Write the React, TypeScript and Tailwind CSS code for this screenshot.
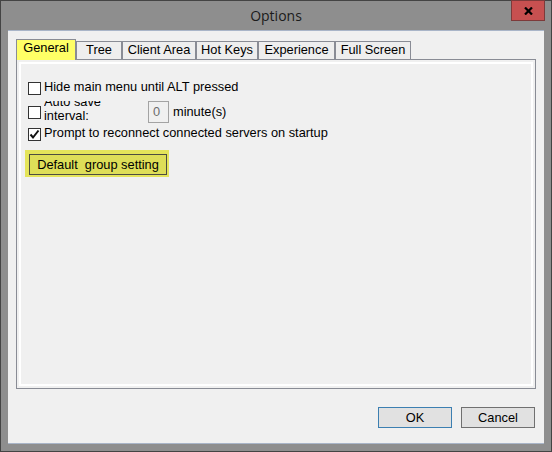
import React from "react";

const tabs = [
  { label: "General", w: "w-[60px]", active: true },
  { label: "Tree", w: "w-[46px]" },
  { label: "Client Area", w: "w-[74px]" },
  { label: "Hot Keys", w: "w-[62px]" },
  { label: "Experience", w: "w-[77px]" },
  { label: "Full Screen", w: "w-[76px]" },
];

function Box({ checked = false }: { checked?: boolean }) {
  return (
    <div className="w-[13px] h-[13px] shrink-0 border border-[#333333] bg-white flex items-center justify-center">
      {checked && (
        <svg width="11" height="11" viewBox="0 0 11 11">
          <path d="M1.5 5.5 L4 8.5 L9.5 1.5" stroke="#111" strokeWidth="2" fill="none" />
        </svg>
      )}
    </div>
  );
}

export default function App() {
  return (
    <div
      className="w-[552px] h-[452px] bg-[#8e8e8e] border border-[#444444] flex flex-col relative"
      style={{ fontFamily: '"Liberation Sans", Arial, sans-serif' }}
    >
      <div
        className="h-[29px] flex items-center justify-center text-[14px] text-[#1b1b1b]"
        style={{ fontFamily: '"Open Sans", "Noto Sans", sans-serif' }}
      >
        Options
      </div>
      <div className="absolute -top-px right-[6px] w-[34px] h-[21px] bg-[#c75050] border border-[#7d3a3a] flex items-center justify-center">
        <svg width="9" height="8" viewBox="0 0 9 8">
          <path d="M1 0.5 L8 7.5 M8 0.5 L1 7.5" stroke="#000" strokeWidth="2.2" />
        </svg>
      </div>

      <div className="mx-[7px] mb-[7px] flex-1 bg-[#f0f0f0] border-t border-b border-[#a9b5c8] flex flex-col pt-[8px] px-[8px] text-[12.8px] text-black">
        <div className="h-[20px] flex items-end">
          {tabs.map((t) =>
            t.active ? (
              <div
                key={t.label}
                className={`${t.w} h-[21px] -mb-px z-10 bg-[#ffff66] border-l border-t border-r border-[#898c95] flex justify-center leading-[15px]`}
              >
                {t.label}
              </div>
            ) : (
              <div
                key={t.label}
                className={`${t.w} h-[18px] bg-[#eeeeee] border-l border-t border-r border-[#898c95] flex justify-center leading-[15px]`}
              >
                {t.label}
              </div>
            )
          )}
        </div>

        <div className="w-[520px] h-[330px] border border-[#898c95] p-[2px] bg-[#f0f0f0]">
          <div className="w-full h-full border-2 border-white flex flex-col pt-[18px] pl-[7px]">
            <div className="flex items-center h-[13px]">
              <Box />
              <span className="ml-[3px] mb-[4px] leading-[15px] whitespace-nowrap">
                Hide main menu until ALT pressed
              </span>
            </div>

            <div className="flex items-center h-[24px] mt-[5px]">
              <Box />
              <div className="ml-[3px] w-[96px] h-[22px] overflow-hidden flex items-end">
                <div className="leading-[14px]">
                  Auto save
                  <br />
                  interval:
                </div>
              </div>
              <div className="ml-[8px] w-[21px] h-[22px] border border-[#a3a3a3] bg-[#f0f0f0] text-[#6d6d6d] pl-[4px] leading-[19px]">
                0
              </div>
              <span className="ml-[4px] mb-[2px] leading-[15px]">minute(s)</span>
            </div>

            <div className="flex items-center h-[13px] mt-[4px]">
              <Box checked />
              <span className="ml-[3px] mb-[4px] leading-[15px] whitespace-nowrap">
                Prompt to reconnect connected servers on startup
              </span>
            </div>

            <div className="mt-[9px] -ml-[3px] w-[144px] h-[27px] bg-[#e4e45a] pt-[4px] pl-[4px]">
              <div className="w-[138px] h-[21px] border border-[#4d4d40] bg-[#dede58] flex items-center justify-center whitespace-pre leading-[15px]">
                {"Default  group setting"}
              </div>
            </div>
          </div>
        </div>

        <div className="flex justify-end gap-[9px] pr-[1px] mt-[18px]">
          <div className="w-[74px] h-[21px] bg-[#e1e1e1] border border-[#3c7fb1] flex items-center justify-center leading-[15px]">
            OK
          </div>
          <div className="w-[74px] h-[21px] bg-[#e1e1e1] border border-[#707070] flex items-center justify-center leading-[15px]">
            Cancel
          </div>
        </div>
      </div>
    </div>
  );
}
